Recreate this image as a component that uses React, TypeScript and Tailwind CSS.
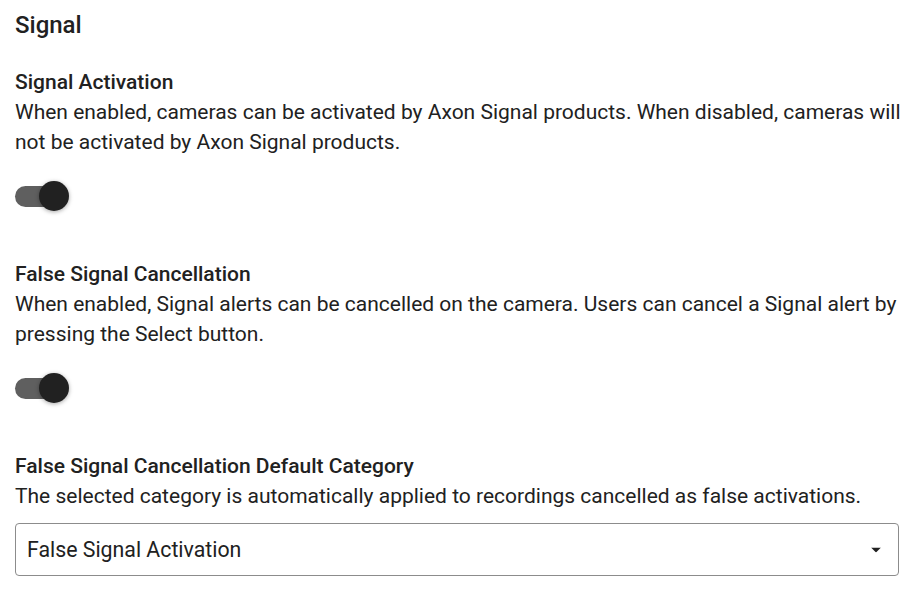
import { useState } from 'react';

interface ToggleProps {
  checked: boolean;
  onChange: (v: boolean) => void;
}

function Toggle({ checked, onChange }: ToggleProps) {
  return (
    <button
      type="button"
      role="switch"
      aria-checked={checked}
      onClick={() => onChange(!checked)}
      className="relative block w-[54px] h-[30px]"
    >
      <span
        className={`absolute left-0 top-[4.5px] w-[51px] h-[21px] rounded-full ${checked ? 'bg-[#5f5f5f]' : 'bg-[#bdbdbd]'}`}
      />
      <span
        className={`absolute top-0 w-[30px] h-[30px] rounded-full shadow-[0_1px_4px_rgba(0,0,0,0.35)] ${checked ? 'right-0 bg-[#212121]' : 'left-[-3px] bg-[#fafafa]'}`}
      />
    </button>
  );
}

export default function App() {
  const [activation, setActivation] = useState(true);
  const [cancellation, setCancellation] = useState(true);
  const [category, setCategory] = useState('False Signal Activation');

  return (
    <div
      className="min-h-screen bg-white text-[#212121] pl-[15px] pr-[10px] pt-[10px]"
      style={{ fontFamily: 'Roboto, "Noto Sans", sans-serif' }}
    >
      <h2 className="text-[24px] leading-[30px] font-medium">Signal</h2>

      <section className="mt-[27px]">
        <h3 className="text-[21px] leading-[30px] font-medium">Signal Activation</h3>
        <p className="text-[21px] leading-[30px]">
          When enabled, cameras can be activated by Axon Signal products. When disabled, cameras will
          not be activated by Axon Signal products.
        </p>
        <div className="mt-[24px]">
          <Toggle checked={activation} onChange={setActivation} />
        </div>
      </section>

      <section className="mt-[48px]">
        <h3 className="text-[21px] leading-[30px] font-medium">False Signal Cancellation</h3>
        <p className="text-[21px] leading-[30px]">
          When enabled, Signal alerts can be cancelled on the camera. Users can cancel a Signal alert by
          pressing the Select button.
        </p>
        <div className="mt-[24px]">
          <Toggle checked={cancellation} onChange={setCancellation} />
        </div>
      </section>

      <section className="mt-[48px]">
        <h3 className="text-[21px] leading-[30px] font-medium">False Signal Cancellation Default Category</h3>
        <p className="text-[21px] leading-[30px]">
          The selected category is automatically applied to recordings cancelled as false activations.
        </p>
        <div className="relative mt-[12px] w-[884px]">
          <select
            value={category}
            onChange={e => setCategory(e.target.value)}
            className="appearance-none w-full h-[53px] border border-[#8c8c8c] rounded-[4px] bg-white pl-[11px] pr-[40px] text-[21.3px] text-[#212121] outline-none"
            style={{ fontFamily: 'Roboto, "Noto Sans", sans-serif' }}
          >
            <option>False Signal Activation</option>
            <option>Accidental Activation</option>
            <option>Test</option>
          </select>
          <svg
            className="pointer-events-none absolute right-[18px] top-1/2 -translate-y-1/2"
            width="10"
            height="5"
            viewBox="0 0 10 5"
          >
            <path d="M0 0L5 5L10 0Z" fill="#212121" />
          </svg>
        </div>
      </section>
    </div>
  );
}
